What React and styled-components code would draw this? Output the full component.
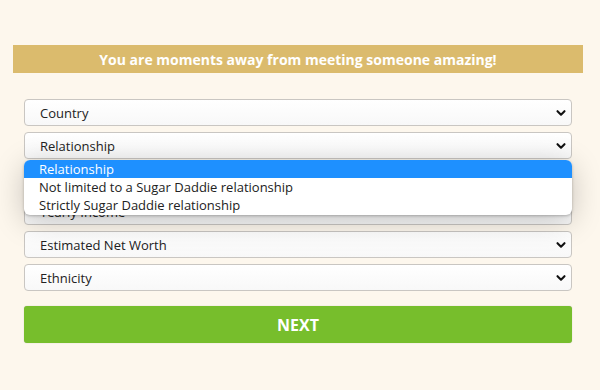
import React from "react";
import styled, { createGlobalStyle } from "styled-components";

const Global = createGlobalStyle`
  html, body { margin: 0; padding: 0; background: #fdf7ed; }
  body { font-family: "Open Sans", "Noto Sans", sans-serif; }
`;

const Page = styled.div`
  width: 600px;
  height: 390px;
  padding: 45px 17px 0 13px;
  box-sizing: border-box;
  overflow: hidden;
`;

const Banner = styled.div`
  height: 28px;
  background: #dbbb6d;
  color: #fff;
  font-weight: 700;
  font-size: 14px;
  display: flex;
  align-items: center;
  justify-content: center;
`;

const Form = styled.div`
  padding: 26px 11px 0;
  display: flex;
  flex-direction: column;
  gap: 6px;
`;

const Field = styled.div`
  position: relative;
  margin-bottom: ${(p) => (p.$open ? "33px" : "0")};
`;

const Select = styled.div`
  height: 27px;
  box-sizing: border-box;
  border: 1px solid #c9c6c2;
  border-radius: 4px;
  background: linear-gradient(#ffffff, #f8f8f8);
  display: flex;
  align-items: center;
  padding: 0 5px 0 15px;
  font-size: 13px;
  color: #222;
`;

const Label = styled.span`
  flex: 1;
`;

const Chevron = () => (
  <svg width="10" height="8" viewBox="0 0 10 8">
    <path d="M1.5 2.2 L5 5.7 L8.5 2.2" fill="none" stroke="#111" strokeWidth="2.1" strokeLinecap="round" strokeLinejoin="round" />
  </svg>
);

const Menu = styled.ul`
  position: absolute;
  top: 28px;
  left: 0;
  right: 0;
  margin: 0;
  padding: 0 0 1px;
  list-style: none;
  background: #fff;
  border-radius: 6px;
  box-shadow: 0 6px 30px rgba(0, 0, 0, 0.22), 0 1px 3px rgba(0, 0, 0, 0.25);
  z-index: 2;
  overflow: hidden;
`;

const Option = styled.li`
  height: 18px;
  line-height: 18px;
  padding-left: 15px;
  font-size: 13px;
  color: ${(p) => (p.$active ? "#fff" : "#222")};
  background: ${(p) => (p.$active ? "#1e90ff" : "transparent")};
`;

const Next = styled.button`
  margin-top: 9px;
  height: 37px;
  border: none;
  border-radius: 3px;
  background: #77be2c;
  color: #fff;
  font-family: inherit;
  font-weight: 700;
  font-size: 16px;
  box-shadow: 0 0 1px rgba(0,0,0,0.3);
`;

const fields = ["Country", "Relationship", "Yearly Income", "Estimated Net Worth", "Ethnicity"];
const options = ["Relationship", "Not limited to a Sugar Daddie relationship", "Strictly Sugar Daddie relationship"];

export default function App() {
  return (
    <Page>
      <Global />
      <Banner>You are moments away from meeting someone amazing!</Banner>
      <Form>
        {fields.map((f) => (
          <Field key={f} $open={f === "Relationship"}>
            <Select>
              <Label>{f}</Label>
              <Chevron />
            </Select>
            {f === "Relationship" && (
              <Menu>
                {options.map((o, i) => (
                  <Option key={o} $active={i === 0}>{o}</Option>
                ))}
              </Menu>
            )}
          </Field>
        ))}
        <Next>NEXT</Next>
      </Form>
    </Page>
  );
}
